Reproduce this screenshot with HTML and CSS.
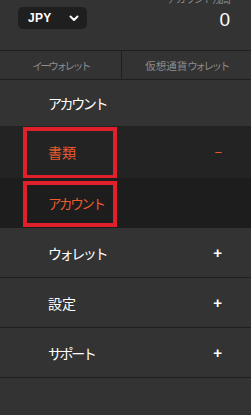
FILE: index.html
```html
<!DOCTYPE html>
<html lang="ja">
<head>
<meta charset="utf-8">
<link rel="stylesheet" href="styles.css">
</head>
<body>
<div class="menu">
  <header class="top">
    <div class="currency">
      <span class="cur-label">JPY</span>
      <svg class="chev" width="10" height="7" viewBox="0 0 10 7"><path d="M1.5 1.5 L5 5 L8.5 1.5" fill="none" stroke="#fff" stroke-width="2" stroke-linecap="round" stroke-linejoin="round"/></svg>
    </div>
    <div class="balance">
      <div class="bal-label">アカウント残高</div>
      <div class="bal-value">0</div>
    </div>
  </header>
  <nav class="tabs">
    <div class="tab"><span class="kana">イーウォレット</span></div>
    <div class="tab">仮想通貨<span class="kana">ウォレット</span></div>
  </nav>
  <div class="row plain"><span class="label kata">アカウント</span></div>
  <div class="row open">
    <span class="label hl">書類</span>
    <span class="sign minus">−</span>
  </div>
  <div class="row sub">
    <span class="label hl kata">アカウント</span>
  </div>
  <div class="row item"><span class="label kata">ウォレット</span><span class="sign">+</span></div>
  <div class="row item"><span class="label">設定</span><span class="sign">+</span></div>
  <div class="row item"><span class="label kata">サポート</span><span class="sign">+</span></div>
</div>
</body>
</html>
```
FILE: styles.css
```css
html, body {
  margin: 0;
  padding: 0;
  background: #333333;
}
body {
  width: 251px;
  height: 415px;
  overflow: hidden;
  font-family: "Noto Sans CJK JP", "Noto Sans", "Liberation Sans", sans-serif;
  color: #fff;
}
.menu {
  display: flex;
  flex-direction: column;
}
.top {
  height: 50px;
  box-sizing: border-box;
  display: flex;
  justify-content: space-between;
  align-items: flex-start;
  padding: 7px 21px 0 18px;
}
.currency {
  width: 69px;
  height: 22px;
  box-sizing: border-box;
  background: #1f1f1f;
  border-radius: 5px;
  display: flex;
  align-items: center;
  justify-content: space-between;
  padding: 0 8px 0 10px;
}
.cur-label {
  font-family: "Liberation Sans", Arial, sans-serif;
  font-weight: bold;
  font-size: 12px;
  letter-spacing: 0.3px;
}
.chev { display: block; }
.balance {
  display: flex;
  flex-direction: column;
  align-items: flex-end;
  margin-top: -15px;
}
.bal-label {
  font-size: 10px;
  color: #8a8a8a;
  line-height: 14px;
  letter-spacing: -1px;
}
.bal-value {
  font-family: "Liberation Sans", Arial, sans-serif;
  font-size: 19px;
  line-height: 20px;
  margin-top: 4px;
}
.tabs {
  display: flex;
  height: 28px;
  border-top: 1px solid #1f1f1f;
  border-bottom: 1px solid #1f1f1f;
}
.tab {
  display: flex;
  align-items: center;
  justify-content: center;
  font-size: 10.5px;
  color: #8c8c8c;
}
.kana { letter-spacing: -2.4px; }
.tab:first-child {
  width: 121px;
  border-right: 1px solid #1f1f1f;
}
.tab:last-child { flex: 1; }
.row {
  display: flex;
  align-items: center;
  justify-content: space-between;
  padding: 0 29px 0 48px;
  box-sizing: border-box;
}
.label {
  font-size: 14px;
  line-height: 18px;
}
.kata { letter-spacing: -2.4px; }
.plain { height: 46px; }
.open {
  height: 52px;
  background: #232323;
  position: relative;
}
.sub {
  height: 50px;
  background: #1d1d1d;
  position: relative;
}
.open::before, .sub::before {
  content: "";
  position: absolute;
  left: 23px;
  width: 94px;
  border: 4px solid #e0202a;
  box-sizing: border-box;
}
.open::before { top: 1px; height: 52px; }
.sub::before { top: 3px; height: 46px; }
.hl { color: #ec5a2e; position: relative; }
.sub .hl { font-size: 13.5px; }
.item {
  height: 50px;
  border-bottom: 1px solid #1f1f1f;
}
.sign {
  font-family: "Liberation Sans", Arial, sans-serif;
  font-weight: bold;
  font-size: 15px;
  color: #fff;
}
.minus {
  color: #ec5a2e;
  font-weight: normal;
  font-size: 13px;
}
```
